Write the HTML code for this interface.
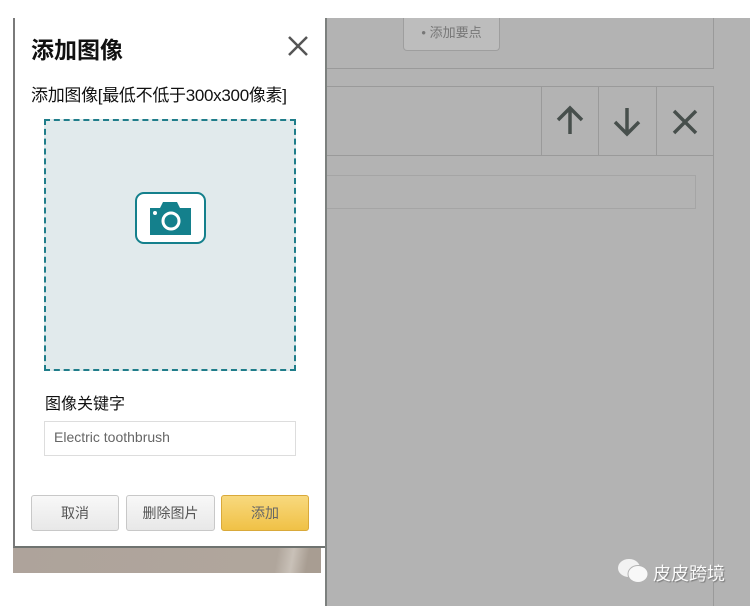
<!DOCTYPE html>
<html><head><meta charset="utf-8"><style>
body{margin:0;width:750px;height:606px;background:#fff;position:relative;overflow:hidden;font-family:"Liberation Sans","Noto Sans CJK SC",sans-serif}
.a{position:absolute;box-sizing:border-box}
.btn{position:absolute;top:495px;height:36px;border:1px solid #c8c8c8;border-radius:3px;background:linear-gradient(#f8f8f8,#e8e8e8);font-size:14px;color:#555;text-align:center;line-height:34px;box-sizing:border-box}
</style></head><body>
<div class="a" style="left:326px;top:18px;width:424px;height:588px;background:#b3b3b3"></div>
<div class="a" style="left:326px;top:18px;width:388px;height:51px;border-right:1px solid #9a9a9a;border-bottom:1px solid #9a9a9a"></div>
<div class="a" style="left:403px;top:18px;width:97px;height:33px;border:1px solid #9e9e9e;border-top:none;border-radius:0 0 4px 4px;background:#bdbdbd;font-size:13px;color:#777;text-align:center;line-height:30px">• 添加要点</div>
<div class="a" style="left:326px;top:86px;width:388px;height:70px;border:1px solid #9a9a9a;border-left:none"></div>
<div class="a" style="left:541px;top:86px;width:1px;height:70px;background:#9a9a9a"></div>
<div class="a" style="left:598px;top:86px;width:1px;height:70px;background:#9a9a9a"></div>
<div class="a" style="left:656px;top:86px;width:1px;height:70px;background:#9a9a9a"></div>
<div class="a" style="left:713px;top:156px;width:1px;height:450px;background:#9a9a9a"></div>
<div class="a" style="left:326px;top:175px;width:370px;height:34px;border:1px solid #a5a5a5;border-left:none"></div>
<svg class="a" style="left:541px;top:86px" width="172" height="70" fill="none" stroke="#474f4c" stroke-width="3.5">
<path d="M29 48V22M17 34L29 22L41 34"/>
<path d="M86 22V48M74 36L86 48L98 36"/>
<path d="M133 25L155 47M155 25L133 47"/>
</svg>
<div class="a" style="left:325px;top:18px;width:2px;height:588px;background:#7c807e"></div>
<div class="a" style="left:13px;top:18px;width:312px;height:530px;background:#fff;border-left:2px solid #7a7a7a;border-bottom:2px solid #6f7370"></div>
<div class="a" style="left:13px;top:548px;width:308px;height:25px;background:linear-gradient(100deg,#aea39b 0%,#b0a69c 85%,#c9c1b8 90%,#a89d92 95%)"></div>
<div class="a" style="left:31px;top:31px;font-size:23px;font-weight:bold;color:#111">添加图像</div>
<svg class="a" style="left:287px;top:35px" width="22" height="22" stroke="#555" stroke-width="2.5"><path d="M2 2L20 20M20 2L2 20"/></svg>
<div class="a" style="left:31px;top:81px;font-size:17px;color:#111;letter-spacing:-0.3px">添加图像[最低不低于300x300像素]</div>
<div class="a" style="left:44px;top:119px;width:252px;height:252px;background:#e1eaec;border:2px dashed #1f7d8a"></div>
<div class="a" style="left:135px;top:192px;width:71px;height:52px;border:2px solid #14808c;border-radius:9px;background:#fff"></div>
<svg class="a" style="left:148px;top:201px" width="45" height="35"><path d="M2 7H12L15 1H29L32 7H43V34H2Z" fill="#14808c"/><circle cx="23" cy="20" r="8" fill="none" stroke="#fff" stroke-width="3"/><circle cx="7" cy="12" r="2" fill="#fff"/></svg>
<div class="a" style="left:45px;top:390px;font-size:16px;color:#111">图像关键字</div>
<div class="a" style="left:44px;top:421px;width:252px;height:35px;border:1px solid #ddd;font-size:14px;color:#666;padding:7px 0 0 9px">Electric toothbrush</div>
<div class="btn" style="left:31px;width:88px">取消</div>
<div class="btn" style="left:126px;width:89px">删除图片</div>
<div class="btn" style="left:221px;width:88px;background:linear-gradient(#f8d97e,#f0c146);border-color:#d9a93a;color:#666">添加</div>
<svg class="a" style="left:617px;top:558px" width="32" height="26"><ellipse cx="12" cy="10" rx="11" ry="9" fill="#f2f2f2"/><ellipse cx="21" cy="16" rx="10" ry="8.5" fill="#f8f8f8" stroke="#b3b3b3" stroke-width="1"/></svg>
<div class="a" style="left:653px;top:560px;font-size:18px;color:#fafafa;text-shadow:1px 1px 1px #777">皮皮跨境</div>
</body></html>
